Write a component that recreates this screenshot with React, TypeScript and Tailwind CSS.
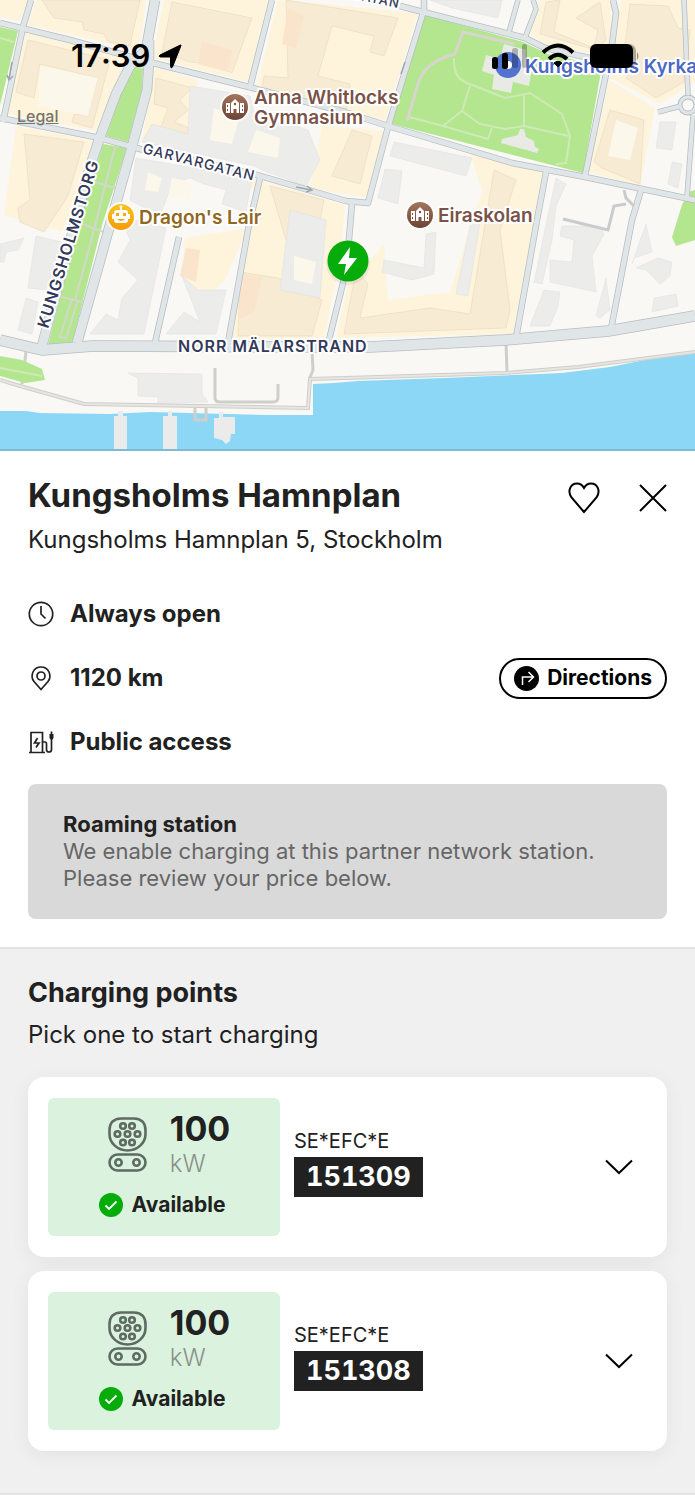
import React from "react";

interface ChargingPointProps {
  prefix: string;
  code: string;
  power: number;
}

const roads: { d: string; w: number }[] = [
  { d: "M0 23L70 40L153 63L253 88L345 112L388 126L512 163L585 177L695 200", w: 5 },
  { d: "M0 118L100 138L140 149L250 173L346 201L368 203L388 127L424 10V0", w: 5 },
  { d: "M31 0L23 27L3 122", w: 5 },
  { d: "M272 0L250 87", w: 5 },
  { d: "M400 6L423 12L525 38L545 48L607 62", w: 5 },
  { d: "M518 0L509 32M533 0L536 9L525 38", w: 4 },
  { d: "M613 0L616 13L612 45L585 176", w: 5 },
  { d: "M547 167L537 220L516 338", w: 5 },
  { d: "M641 190L632 220L611 329", w: 5 },
  { d: "M693 115L687 197M658 112L681 106M688 95L684 0", w: 4 },
  { d: "M352 204L347 262L343 283L328 344", w: 5 },
  { d: "M260 178L248 230L228 343", w: 5 },
  { d: "M179 237L155 343", w: 5 },
  { d: "M155 0L146 50L130 66L116 94L100 137L90 167L42 346", w: 9 },
  { d: "M149 40V62L147 90L133 143L110 225L77 343", w: 9 },
  { d: "M0 340L42 350L93 346L345 347L370 347L505 340L608 331L695 316", w: 10 },
];

const creamBlocks = [
  "0,0 28,0 20,21 0,17",
  "36,0 146,0 139,50 28,25",
  "26,31 134,60 112,90 96,131 6,114",
  "164,0 268,0 248,82 152,58",
  "278,0 418,13 385,121 257,85",
  "155,67 198,80 190,134 142,140",
  "322,125 384,131 366,198 310,188",
  "16,126 95,141 88,168 62,232 4,215",
  "232,172 345,205 340,262 324,338 232,340 254,190",
  "185,238 248,228 225,280 198,304 182,276",
  "470,154 543,171 513,334 336,338 348,284 384,244 388,300 450,292 482,190",
  "540,0 611,0 611,42 600,56 545,44 530,34",
  "621,0 695,0 695,82 660,104 610,78",
  "609,80 655,108 640,186 588,172",
];

const creamBuildings = [
  "42,0 140,0 130,46 108,42 104,34 84,30 82,22 54,18",
  "28,40 110,60 92,128 72,122 74,114 88,116 98,78 40,64 34,98 16,92",
  "172,2 252,18 232,73 212,64 190,62 162,52",
  "286,0 398,18 384,56 370,52 374,36 332,26 318,76 350,84 346,112 262,90 264,76 288,78",
  "156,78 192,88 180,100 188,110 174,122 194,130 184,136 160,130 168,108 154,104",
  "24,134 84,142 68,196 44,232 20,222 18,208 30,200",
  "240,272 278,278 298,290 322,300 312,336 238,336",
  "270,186 324,200 314,250 286,240",
  "356,270 368,284 360,318 430,308 470,314 494,170 516,180 500,230 510,310 506,328 344,334",
  "352,130 372,136 360,184 332,176",
  "546,2 560,0 554,32 594,48 598,30 576,18 600,2 606,40 596,50 540,34",
  "630,4 668,6 678,28 690,30 684,82 656,98 626,78 636,60 624,52",
  "610,110 644,120 640,184 602,168 594,162",
];

const greyBuildings = [
  "190,86 250,96 254,112 308,130 320,160 306,186 262,170 255,166 142,142 152,124 188,134",
  "136,158 252,178 246,212 222,204 226,190 204,184 190,178 172,184 160,216 130,200",
  "120,216 166,228 144,334 90,334 106,314 118,320 122,298 138,280 118,262 130,240",
  "182,276 198,290 226,290 216,334 166,334 184,312 200,322",
  "36,236 62,242 46,290 28,288",
  "26,298 38,302 32,334 18,330",
  "0,244 24,238 18,250 6,252 4,262 0,262",
  "290,210 326,220 320,298 280,290",
  "394,142 472,158 466,176 390,156",
  "385,169 402,171 398,204 378,198",
  "384,260 424,268 426,234 436,232 434,274 412,280 382,272",
  "470,226 480,222 468,296 456,294",
  "556,178 566,184 556,206 552,240 542,284 534,282",
  "562,226 600,226 604,234 592,256 596,292 550,282 550,260 572,262 574,240 560,236",
  "544,290 560,292 558,306 550,326 530,326",
  "606,278 610,310 600,318 596,316",
  "646,224 652,252 634,258 632,264",
  "658,258 672,262 670,276 660,284 646,270 636,268",
  "654,298 676,294 678,306 652,312",
  "430,0 502,0 498,18 452,8",
  "660,122 676,122 672,150 656,148",
  "672,162 682,164 678,188 668,184",
  "128,373 202,374 202,394 208,402 158,403 158,397 138,396 138,378",
];

const whiteYards = [
  "40,66 98,78 88,116 38,106",
  "214,108 240,116 232,144 210,140",
  "256,130 280,138 278,158 248,152",
  "172,178 192,182 190,200 168,196",
  "148,172 162,178 158,192 145,190",
  "294,256 316,262 312,284 294,280",
  "616,120 638,128 630,160 608,156",
];

const parks = [
  "422,14 523,42 548,54 602,66 583,173 392,124",
  "0,27 18,31 0,105",
  "134,66 143,68 142,90 128,142 106,136 122,90",
  "103,144 127,148 102,225 72,344 48,345 80,220",
  "0,356 22,360 42,369 45,380 25,383 0,376",
  "682,205 688,192 695,190 695,240 676,246 672,237",
];

function SchoolPin({ x, y }: { x: number; y: number }) {
  return (
    <g transform={`translate(${x} ${y})`}>
      <circle r="15" fill="#fff" opacity=".75" />
      <circle r="13" fill="url(#brown)" />
      <path
        fill="#fff"
        d="M-9-4h4v10h-4zM5-4h4v10H5zM-4-4L0-8L4-4V6H1.500V2h-3v4H-4z"
      />
      <path fill="#7d5140" d="M-8-2h1v2h-1zM-8 2h1v2h-1zM7-2h1v2H7zM7 2h1v2H7z" />
      <circle cy="-3" r="1.200" fill="#7d5140" />
    </g>
  );
}

function CityMap() {
  const label = { stroke: "#fff", strokeWidth: 4, strokeLinejoin: "round" as const, paintOrder: "stroke" };

  return (
    <svg viewBox="0 0 695 451" className="block w-full font-[Inter,sans-serif]" role="img" aria-label="Map">
      <defs>
        <linearGradient id="brown" x1="0" y1="0" x2="0" y2="1">
          <stop offset="0" stopColor="#a3755b" />
          <stop offset="1" stopColor="#6c4335" />
        </linearGradient>
        <linearGradient id="amber" x1="0" y1="0" x2="0" y2="1">
          <stop offset="0" stopColor="#fcc419" />
          <stop offset="1" stopColor="#f59a0c" />
        </linearGradient>
      </defs>
      <rect width="695" height="451" fill="#f9f8f5" />
      {creamBlocks.map((p) => <polygon key={p} points={p} fill="#fef4dc" />)}
      {creamBuildings.map((p) => <polygon key={p} points={p} fill="#f8ebd3" stroke="#e8d8bb" strokeWidth=".6" />)}
      {greyBuildings.map((p) => <polygon key={p} points={p} fill="#ececeb" stroke="#dedede" strokeWidth=".5" />)}
      {whiteYards.map((p) => <polygon key={p} points={p} fill="#fbf7ea" />)}
      <path fill="#fae4cb" d="M202 42l30 8-4 22-30-8zM242 274l20 2-8 36-16 8zM288 8l16 8-8 32-14-4zM186 248l14 2-4 32-16-6z" />

      {/* water and piers */}
      <path fill="#8cd6f6" d="M0 411L26 411L40 413L110 414L150 412L268 415H313V384L334 383L358 381L445 378L540 374L562 373L610 367L645 360L695 353V451H0z" />
      <path fill="#ebebeb" d="M114 416h4v-5h5v5h4v35h-13zM163 416h5v-5h4v5h5v35h-14zM214 418h5v-6h4v5h12v17h-4l-1 7-4 3-4-4-8-2z" />
      <g fill="none" stroke="#cfcfca" strokeWidth="4">
        <path d="M0 380L20 386L84 404L200 406L308 408L310 379L345 378L505 373L578 367L695 352" />
        <path d="M26 352L22 384M215 368V398Q215 402 220 402H273Q278 402 278 397V384M312 350L313 370L309 380M506 342L507 372M195 408V420H206V408" strokeWidth="3" />
      </g>
      <path fill="none" stroke="#e6e5e1" strokeWidth="2" d="M0 380L20 386L84 404L200 406L308 408L310 379L345 378L505 373L578 367L695 352" />

      {parks.map((p) => <polygon key={p} points={p} fill="#b3e68f" />)}
      <path fill="none" stroke="#cdeab7" strokeWidth="2" d="M454 58Q453 80 470 84L490 92L505 98L530 93L562 114L570 136L566 163L556 164M470 86L462 111L443 126L409 117M462 111L480 124L505 129L524 126L569 136M524 94V126M492 128L488 139L443 126M0 38l14 4M0 368l42 8" />
      <path fill="none" stroke="#d8d5cf" strokeWidth="3" d="M407 121L418 84Q424 62 455 54L463 32L515 44" />
      <path fill="none" stroke="#d3d8c8" strokeWidth="2" d="M115 147L90 245L75 300M95 182L115 188M82 224L104 232M58 296L83 302M72 298L60 337L66 338L78 300" />
      <path fill="#e9e9e6" d="M504 44l22 6-1 10 8 2-4 24-16-4-2 11-19-4 2-14-12-4 4-16 14 4zM502 139l16-4 2-6h4l2 8 8 4 1 6 4 2-2 4-36-10z" />

      {roads.map((r) => <path key={r.d} d={r.d} fill="none" stroke="#b5bdc2" strokeWidth={r.w + 1.500} strokeLinejoin="round" />)}
      <circle cx="688" cy="105" r="8" fill="#f9f8f5" stroke="#b5bdc2" strokeWidth="5" />
      {roads.map((r) => <path key={r.d} d={r.d} fill="none" stroke="#e0e6e8" strokeWidth={r.w} strokeLinejoin="round" />)}
      <circle cx="688" cy="105" r="8" fill="none" stroke="#e0e6e8" strokeWidth="3" />
      <path fill="none" stroke="#c9ccce" strokeWidth="3" d="M624 190L626 198L634 206M626 204L614 206L608 230L563 219" />
      <path fill="none" stroke="#9ea7ad" strokeWidth="1.500" d="M12 62L9 79M7 75l2 5 4-4M296 187l15 3M307 186l5 4-6 2M405 62l-4 12" />
      <rect y="449" width="695" height="2" fill="#7fb9d2" />

      {/* street names */}
      <g {...label} fill="#33395a">
        <text transform="translate(48 329) rotate(-73)" fontSize="16" fontWeight="600" letterSpacing="1">KUNGSHOLMSTORG</text>
        <text transform="translate(142 153) rotate(14)" fontSize="14" fontWeight="500" letterSpacing="1">GARVARGATAN</text>
        <text x="178" y="352" fontSize="16" fontWeight="600" letterSpacing="1">NORR MÄLARSTRAND</text>
        <text transform="translate(351 -2) rotate(12)" fontSize="13" fontWeight="500" letterSpacing="1">GATAN</text>
      </g>

      {/* places */}
      <SchoolPin x={235} y={107} />
      <SchoolPin x={420} y={215} />
      <circle cx="121" cy="217" r="15" fill="#fff" opacity=".75" />
      <circle cx="121" cy="217" r="13" fill="url(#amber)" />
      <path fill="#fff" d="M120 210v-2a1.500 1.500 0 1 1 2 0v2h3q3 0 3 3v1h2v5h-2v1q0 3-3 3h-8q-3 0-3-3v-1h-2v-5h2v-1q0-3 3-3z" />
      <path fill="#f5a80f" d="M116 213h3v3h-3zM123 213h3v3h-3zM117 219h8q-4 4-8 0z" />
      <circle cx="508" cy="65" r="13" fill="#5273cf" />
      <circle cx="508" cy="65" r="4" fill="#fff" />
      <g {...label} fontSize="19" fontWeight="600">
        <g fill="#7a5248">
          <text x="254" y="104">Anna Whitlocks</text>
          <text x="254" y="124">Gymnasium</text>
          <text x="438" y="222">Eiraskolan</text>
        </g>
        <text x="139" y="224" fill="#90681d">Dragon's Lair</text>
        <text x="525" y="73" fill="#4b68c4">Kungsholms Kyrka</text>
      </g>

      {/* selected station */}
      <circle cx="348" cy="263" r="22" fill="#000" opacity=".06" />
      <circle cx="348" cy="261" r="20.500" fill="#05ac0a" />
      <path fill="#fff" d="M350 247L338 264H346L344 275L357 258H349z" />
    </svg>
  );
}

function StatusBar() {
  return (
    <div className="absolute inset-x-0 top-0 flex items-center justify-between pt-9 pr-14 pl-[71px] text-black">
      <div className="flex items-center gap-2">
        <span className="text-[31px] leading-10 font-semibold">17:39</span>
        <svg width="25" height="25" viewBox="0 0 25 25" aria-hidden="true">
          <path d="M23 1.500L14.500 23q-1.500 2-2-.5V13H2.500Q0 12.500 2 11L22 1.200q1.500-.5 1 .3z" fill="currentColor" stroke="currentColor" />
        </svg>
      </div>
      <div className="flex items-center gap-[14px]">
        <svg width="36" height="26" viewBox="0 0 36 26" aria-hidden="true">
          <rect x="1" y="14" width="6" height="12" rx="2.500" />
          <rect x="11" y="10" width="6" height="16" rx="2.500" />
          <rect x="21" y="5" width="6" height="20" rx="2.500" opacity=".25" />
          <rect x="31" y="1" width="5" height="24" rx="2.500" opacity=".25" />
        </svg>
        <svg width="34" height="26" viewBox="0 0 34 26" fill="none" stroke="currentColor" strokeWidth="4" aria-hidden="true">
          <path d="M2 9.500Q17-4.500 32 9.500M8 16Q17 7.500 26 16" />
          <path d="M17 24l-4-4q4-3.500 8 0z" fill="currentColor" strokeWidth="1" />
        </svg>
        <svg width="50" height="26" viewBox="0 0 50 26" aria-hidden="true">
          <rect x="1" y="1" width="46" height="24" rx="7" opacity=".3" />
          <rect x="1" y="1" width="43" height="24" rx="6" />
          <path d="M48 9q3 4 0 8z" opacity=".4" />
        </svg>
      </div>
    </div>
  );
}

function CcsIcon() {
  const pins = [[15, 9], [24, 9], [9.500, 17], [19.500, 17], [29.500, 17], [15, 25.500], [24, 25.500]];
  return (
    <svg width="39" height="55" viewBox="0 0 39 55" fill="none" stroke="#5f6b62" strokeWidth="2.600" aria-hidden="true">
      <path d="M13 1.500H26Q37.500 2 37.500 13.500V17A18 16.500 0 0 1 1.500 17V13.500Q1.500 2 13 1.500z" />
      {pins.map(([x, y]) => <circle key={`${x}-${y}`} cx={x} cy={y} r="2.800" />)}
      <rect x="1.500" y="37.500" width="36" height="16" rx="8" />
      <circle cx="10.500" cy="45.500" r="3.200" />
      <circle cx="28.500" cy="45.500" r="3.200" />
    </svg>
  );
}

function ChargingPoint({ prefix, code, power }: ChargingPointProps) {
  return (
    <li className="flex items-center rounded-2xl bg-white px-5 py-[21px] shadow-[0_4px_20px_rgba(0,0,0,0.06)]">
      <div className="flex w-[232px] flex-col items-center gap-2.5 rounded-md bg-[#dbf3de] pt-[11px] pb-[15px]">
        <div className="flex items-start gap-[23px] pl-2.5">
          <div className="pt-2">
            <CcsIcon />
          </div>
          <div>
            <p className="text-[34px] leading-10 font-bold">{power}</p>
            <p className="text-2xl leading-[30px] font-light text-[#8a918b]">kW</p>
          </div>
        </div>
        <div className="flex items-center gap-[9px] pr-1">
          <svg width="24" height="24" viewBox="0 0 24 24" fill="none" aria-hidden="true">
            <circle cx="12" cy="12" r="12" fill="#05ac0a" />
            <path d="M6.500 12.500L10 16L17.500 8.500" stroke="#fff" strokeWidth="1.800" />
          </svg>
          <span className="text-[21px] leading-8 font-bold">Available</span>
        </div>
      </div>
      <div className="ml-[14px] flex flex-col items-start gap-0.5 pb-2.5">
        <span className="text-xl leading-7">{prefix}</span>
        <span className="bg-[#212121] px-3 text-[27px] leading-10 font-bold text-white tabular-nums">{code}</span>
      </div>
      <button type="button" aria-label={`Show ${code}`} className="mr-[14px] ml-auto">
        <svg width="28" height="16" viewBox="0 0 28 16" fill="none" stroke="#000" strokeWidth="2" aria-hidden="true">
          <path d="M1 1.500L14 14L27 1.500" />
        </svg>
      </button>
    </li>
  );
}

export default function App() {
  return (
    <main className="bg-white font-[Inter,sans-serif] text-[#212121]">
      <div className="relative">
        <CityMap />
        <a href="#legal" className="absolute top-[106px] left-[17px] text-base leading-5 font-medium text-[#77736a] underline">
          Legal
        </a>
        <StatusBar />
      </div>

      <section className="px-7 pt-6 pb-7">
        <div className="flex items-center justify-between">
          <h1 className="text-[33px] leading-10 font-bold">Kungsholms Hamnplan</h1>
          <div className="flex items-center gap-[39px] pt-1.5 text-black">
            <button type="button" aria-label="Add to favourites">
              <svg width="32" height="32" viewBox="0 0 32 32" fill="none" stroke="currentColor" strokeWidth="2" aria-hidden="true">
                <path d="M16 30L3.500 15.500C-1 9 2.500 1.500 9 1.500Q13.500 1.500 16 6Q18.500 1.500 23 1.500C29.500 1.500 33 9 28.500 15.500z" />
              </svg>
            </button>
            <button type="button" aria-label="Close">
              <svg width="28" height="28" viewBox="0 0 28 28" fill="none" stroke="currentColor" strokeWidth="2" aria-hidden="true">
                <path d="M1 1L27 27M27 1L1 27" />
              </svg>
            </button>
          </div>
        </div>
        <p className="mt-[9px] text-2xl leading-8">Kungsholms Hamnplan 5, Stockholm</p>

        <ul className="mt-[26px] text-2xl font-bold">
          <li className="flex h-16 items-center gap-4">
            <svg width="26" height="26" viewBox="0 0 26 26" fill="none" stroke="currentColor" strokeWidth="1.700" aria-hidden="true">
              <circle cx="13" cy="13" r="11.700" />
              <path d="M13 5V13L17.500 17.500" />
            </svg>
            Always open
          </li>
          <li className="flex h-16 items-center gap-4">
            <svg width="26" height="26" viewBox="0 0 26 26" fill="none" stroke="currentColor" strokeWidth="1.700" aria-hidden="true">
              <path d="M13 24.500L6 16.500C1.500 10.500 5.500 2 13 2S24.500 10.500 20 16.500z" />
              <circle cx="13" cy="11" r="4" />
            </svg>
            1120 km
            <button type="button" className="ml-auto flex h-[41px] items-center gap-2 rounded-full border-2 border-black px-[13px] text-[21px] text-black">
              <svg width="25" height="25" viewBox="0 0 25 25" fill="none" aria-hidden="true">
                <circle cx="12.500" cy="12.500" r="12.500" fill="#000" />
                <path d="M8.500 19V11H19M14.500 6L19.500 11L14.500 16" stroke="#fff" strokeWidth="1.500" />
              </svg>
              Directions
            </button>
          </li>
          <li className="flex h-16 items-center gap-4">
            <svg width="26" height="26" viewBox="0 0 26 26" fill="none" stroke="currentColor" strokeWidth="1.700" aria-hidden="true">
              <path d="M1 23.500H17M3 23.500V3.500H14.500V23.500M14.500 13H17Q18.500 13 18.500 15V20.500Q18.500 23 21 23T23.500 20.500V10" />
              <path d="M9.500 9L6.500 14H11L8 18.500" />
              <path d="M23.500 2.500V10" />
              <path d="M21.500 5H25.500V9L24.500 10.500H22.500L21.500 9z" fill="currentColor" stroke="none" />
            </svg>
            Public access
          </li>
        </ul>

        <div className="mt-[10px] rounded-lg bg-[#d9d9d9] px-[35px] py-[27px] text-[22px] leading-[27px]">
          <h2 className="font-bold">Roaming station</h2>
          <p className="text-[#666]">
            We enable charging at this partner network station.
            <br />
            Please review your price below.
          </p>
        </div>
      </section>

      <section className="border-y-2 border-[#e3e3e3] bg-[#f0f0f0] px-7 pt-[26px] pb-[42px]">
        <h2 className="text-[27px] leading-9 font-bold">Charging points</h2>
        <p className="mt-2 text-2xl leading-8">Pick one to start charging</p>
        <ul className="mt-[26px] flex flex-col gap-[14px]">
          <ChargingPoint prefix="SE*EFC*E" code="151309" power={100} />
          <ChargingPoint prefix="SE*EFC*E" code="151308" power={100} />
        </ul>
      </section>
    </main>
  );
}
